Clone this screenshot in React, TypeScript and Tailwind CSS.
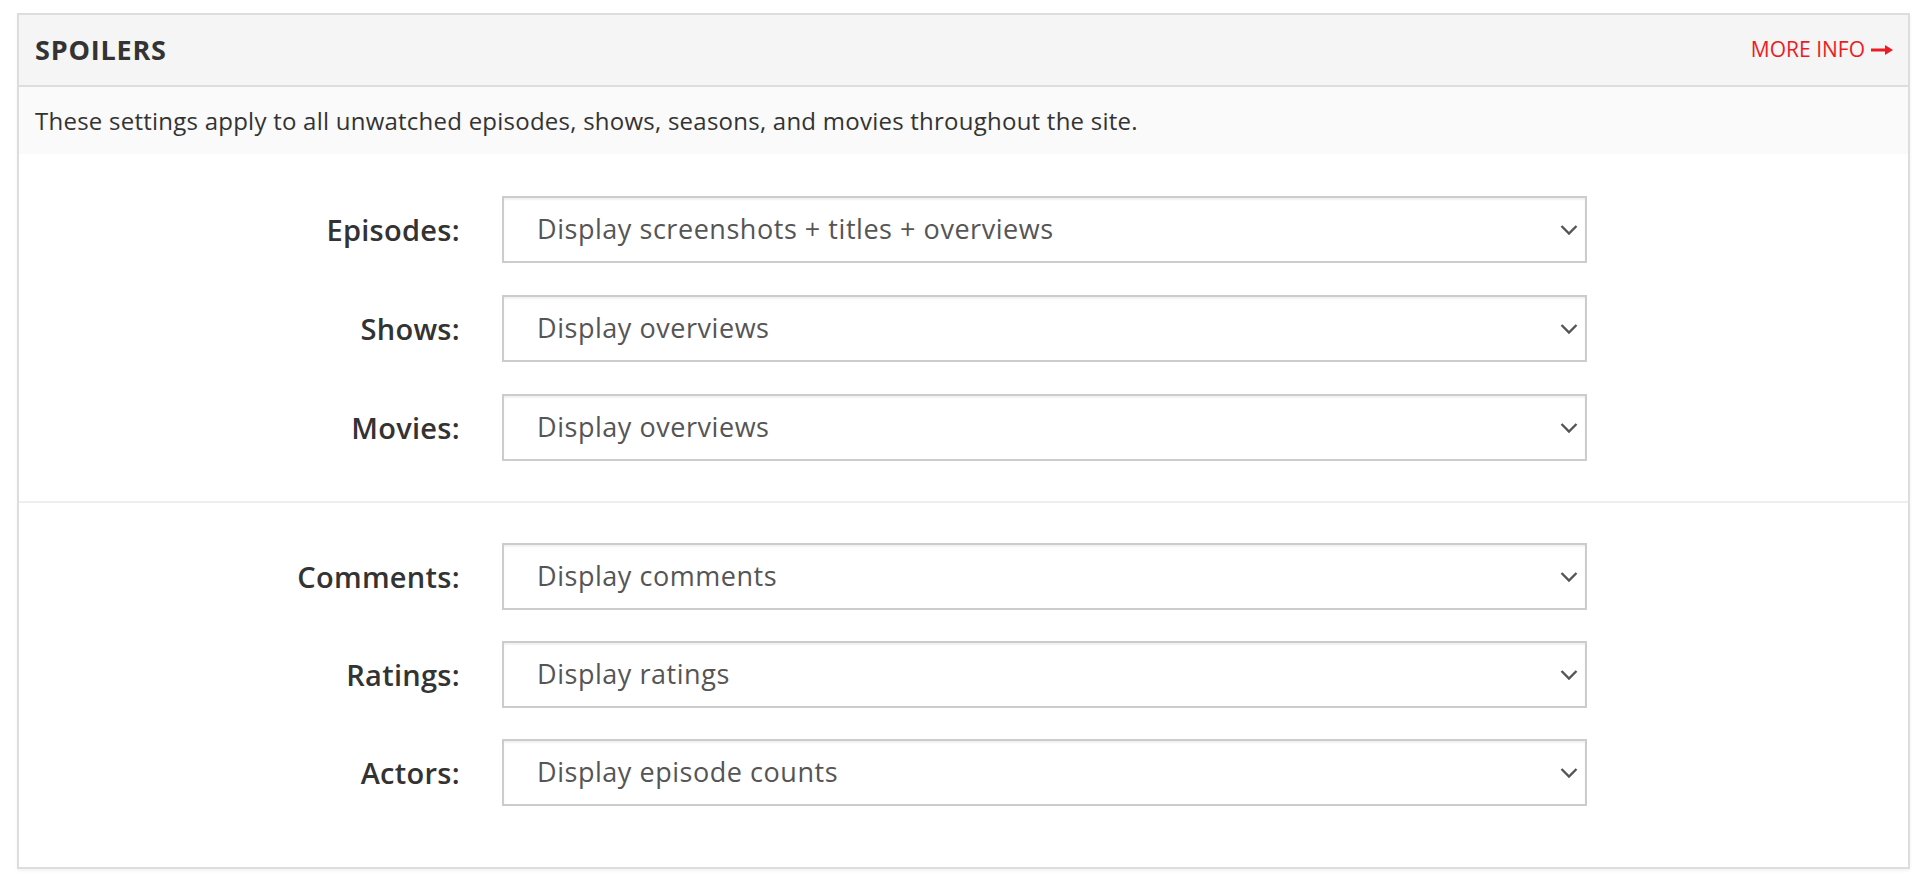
import { useState } from 'react'

type Setting = {
  key: string
  label: string
  value: string
  options: string[]
}

const GROUPS: Setting[][] = [
  [
    {
      key: 'episodes',
      label: 'Episodes:',
      value: 'Display screenshots + titles + overviews',
      options: [
        'Display screenshots + titles + overviews',
        'Hide screenshots',
        'Hide screenshots + titles',
        'Hide screenshots + titles + overviews',
      ],
    },
    {
      key: 'shows',
      label: 'Shows:',
      value: 'Display overviews',
      options: ['Display overviews', 'Hide overviews'],
    },
    {
      key: 'movies',
      label: 'Movies:',
      value: 'Display overviews',
      options: ['Display overviews', 'Hide overviews'],
    },
  ],
  [
    {
      key: 'comments',
      label: 'Comments:',
      value: 'Display comments',
      options: ['Display comments', 'Hide comments'],
    },
    {
      key: 'ratings',
      label: 'Ratings:',
      value: 'Display ratings',
      options: ['Display ratings', 'Hide ratings'],
    },
    {
      key: 'actors',
      label: 'Actors:',
      value: 'Display episode counts',
      options: ['Display episode counts', 'Hide episode counts'],
    },
  ],
]

const FONT = "font-['Open_Sans',_'Liberation_Sans',_sans-serif]"

function Chevron() {
  return (
    <svg
      width="18"
      height="11"
      viewBox="0 0 18 11"
      fill="none"
      className="pointer-events-none absolute right-[9px] top-1/2 -translate-y-1/2"
    >
      <path d="M1.5 1.5 L9 9 L16.5 1.5" stroke="#555" strokeWidth="2.4" />
    </svg>
  )
}

function SettingRow({
  setting,
  value,
  onChange,
}: {
  setting: Setting
  value: string
  onChange: (v: string) => void
}) {
  return (
    <div className="flex items-center gap-[42px]">
      <label className="w-[441px] text-right text-[29px] font-semibold text-[#333] tracking-[0.01em]">
        {setting.label}
      </label>
      <div className="relative w-[1085px]">
        <select
          value={value}
          onChange={(e) => onChange(e.target.value)}
          className={`${FONT} block h-[67px] w-full appearance-none border-2 border-[#ccc] bg-white pl-[33px] pr-12 text-[27px] text-[#555] tracking-[0.02em] shadow-[inset_0_2px_2px_rgba(0,0,0,0.06)] outline-none`}
        >
          {setting.options.map((o) => (
            <option key={o}>{o}</option>
          ))}
        </select>
        <Chevron />
      </div>
    </div>
  )
}

export default function App() {
  const [values, setValues] = useState<Record<string, string>>(() => {
    const init: Record<string, string> = {}
    GROUPS.flat().forEach((s) => (init[s.key] = s.value))
    return init
  })

  return (
    <div className={`${FONT} min-h-screen bg-white pl-[17px] pr-[22px] pt-[13px]`}>
      <div className="w-[1893px] border-2 border-[#ddd] shadow-[0_2px_3px_rgba(0,0,0,0.05)]">
        <div className="flex h-[72px] items-center justify-between border-b-2 border-[#ddd] bg-[#f5f5f5] pl-[16px] pr-[15px]">
          <h2 className="text-[27px] font-bold text-[#333] tracking-[0.03em]">SPOILERS</h2>
          <a href="#" className="flex items-center gap-[6px] text-[21px] text-[#ed1c24] uppercase">
            More info
            <svg width="22" height="10" viewBox="0 0 22 10">
              <path d="M0 3.6 H14 V0 L22 5 L14 10 V6.4 H0 Z" fill="#ed1c24" />
            </svg>
          </a>
        </div>
        <div className="flex h-[67px] items-center bg-[#fafafa] pl-[16px] text-[24px] text-[#333] tracking-[0.01em]">
          These settings apply to all unwatched episodes, shows, seasons, and movies throughout the site.
        </div>
        {GROUPS.map((group, gi) => (
          <div
            key={gi}
            className={
              gi === 0
                ? 'flex flex-col gap-[32px] pt-[42px] pb-[40px]'
                : 'flex flex-col gap-[31px] border-t-2 border-[#eee] pt-[40px] pb-[61px]'
            }
          >
            {group.map((s) => (
              <SettingRow
                key={s.key}
                setting={s}
                value={values[s.key]}
                onChange={(v) => setValues((prev) => ({ ...prev, [s.key]: v }))}
              />
            ))}
          </div>
        ))}
      </div>
    </div>
  )
}
